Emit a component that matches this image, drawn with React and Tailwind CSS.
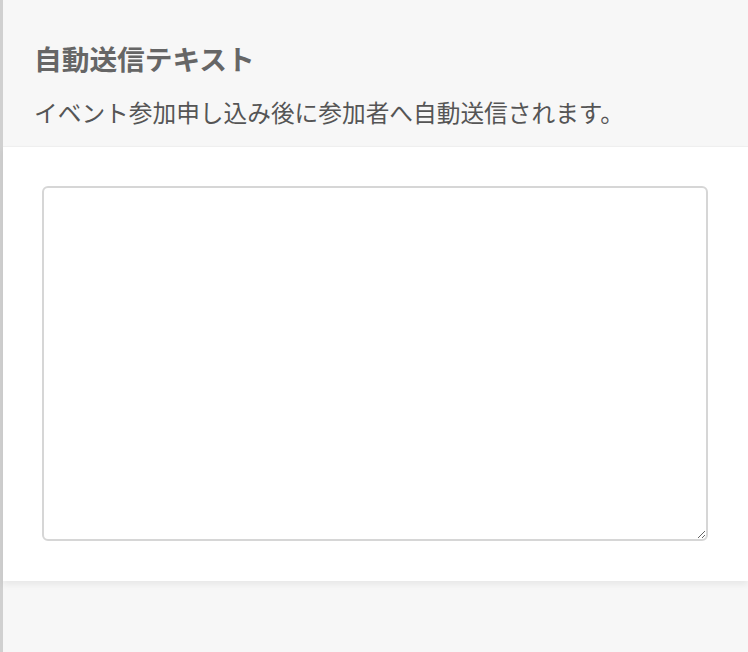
import React from 'react';

export default function App() {
  return (
    <div
      className="min-h-[652px] w-[748px] bg-[#f7f7f7] border-l-[3px] border-[#d0d0d0] text-[#666]"
      style={{ fontFamily: '"Noto Sans CJK JP", "Noto Sans", sans-serif' }}
    >
      <div className="pl-[31px] pt-[39px] pb-[17px]">
        <h2 className="text-[27.7px] font-bold leading-[38px] text-[#666]">自動送信テキスト</h2>
        <p className="mt-[18px] text-[23.7px] leading-[34px] text-[#555]">
          イベント参加申し込み後に参加者へ自動送信されます。
        </p>
      </div>
      <div className="bg-white border-t border-[#efefef] px-[39px] pt-[39px] pb-[40px] shadow-[0_4px_6px_rgba(0,0,0,0.06)]">
        <textarea className="block w-[666px] h-[355px] rounded-[6px] border-2 border-[#d6d6d6] bg-white outline-none" />
      </div>
    </div>
  );
}
